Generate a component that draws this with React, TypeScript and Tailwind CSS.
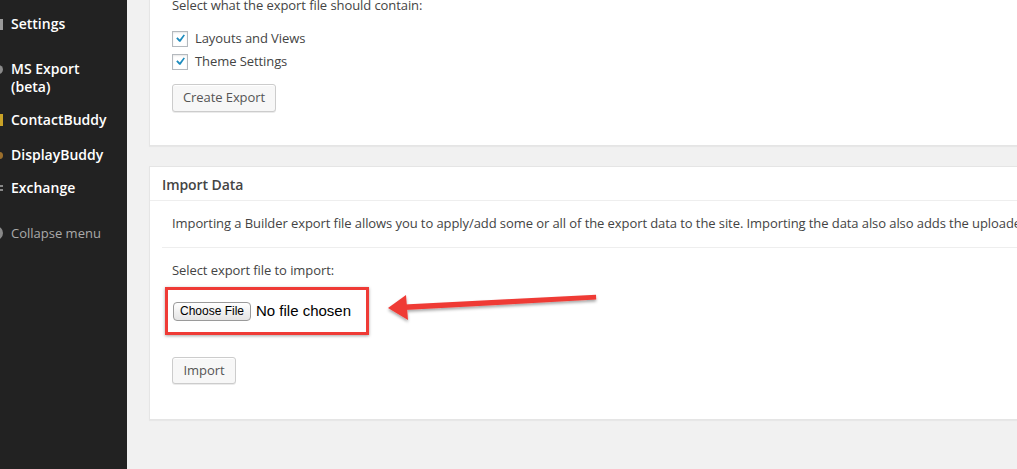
import React from "react";

const font = { fontFamily: '"Open Sans", "Liberation Sans", sans-serif' };

function Check() {
  return (
    <span className="flex h-[16px] w-[16px] items-center justify-center border border-[#b4b9be] bg-white shadow-[inset_0_1px_2px_rgba(0,0,0,0.1)]">
      <svg width="15" height="15" viewBox="0 0 20 20">
        <path d="M15.2 4.2l1.9 1.3-6.4 9.3H8.9L4.6 9.9l1.8-1.7 3.3 3.1z" fill="#1e8cbe" />
      </svg>
    </span>
  );
}

function WpButton({ children, w, h }: { children: React.ReactNode; w: string; h: string }) {
  return (
    <button
      className={`flex items-center justify-center rounded-[3px] border border-[#cccccc] bg-[#f7f7f7] text-[13px] text-[#555] shadow-[inset_0_1px_0_#fff,0_1px_0_rgba(0,0,0,0.08)] ${w} ${h}`}
    >
      {children}
    </button>
  );
}

function MenuItem({ icon, children, className }: { icon: React.ReactNode; children: React.ReactNode; className: string }) {
  return (
    <div className={`flex ${className}`}>
      <div className="relative w-[11px] shrink-0">{icon}</div>
      <div className="text-[14px] font-semibold leading-[18px] text-white">{children}</div>
    </div>
  );
}

export default function App() {
  return (
    <div className="relative flex h-[469px] w-[1017px] overflow-hidden bg-[#f1f1f1] text-[#444]" style={font}>
      <aside className="flex w-[127px] shrink-0 flex-col bg-[#222222]">
        <MenuItem className="mt-[15px]" icon={<div className="absolute left-0 top-[4px] h-[11px] w-[3px] bg-[#9a9a9a]" />}>
          Settings
        </MenuItem>
        <MenuItem className="mt-[27px]" icon={<div className="absolute left-[-6px] top-[5px] h-[9px] w-[9px] rounded-full bg-[#8a8a8a]" />}>
          MS Export
          <br />
          (beta)
        </MenuItem>
        <MenuItem className="mt-[15px]" icon={<div className="absolute left-0 top-[3px] h-[12px] w-[3px] bg-[#c9a227]" />}>
          ContactBuddy
        </MenuItem>
        <MenuItem className="mt-[17px]" icon={<div className="absolute left-[-4px] top-[6px] h-[7px] w-[7px] rounded-full bg-[#9c6f2c]" />}>
          DisplayBuddy
        </MenuItem>
        <MenuItem
          className="mt-[15px]"
          icon={
            <div className="absolute left-0 top-[6px] flex flex-col gap-[2px]">
              <div className="h-[2px] w-[3px] bg-[#888]" />
              <div className="h-[2px] w-[3px] bg-[#888]" />
            </div>
          }
        >
          Exchange
        </MenuItem>
        <div className="mt-[27px] flex">
          <div className="relative w-[11px] shrink-0">
            <div className="absolute left-[-11px] top-[2px] h-[14px] w-[14px] rounded-full bg-[#888]" />
          </div>
          <div className="text-[13px] leading-[18px] text-[#aaaaaa]">Collapse menu</div>
        </div>
      </aside>

      <main className="min-w-0 flex-1 pl-[22px] tracking-[-0.08px]">
        <div className="-mt-[6px] w-[1000px] border border-[#e5e5e5] bg-white pb-[33px] pl-[22px] shadow-[0_1px_1px_rgba(0,0,0,0.04)]">
          <p className="text-[13px] leading-[20px]">Select what the export file should contain:</p>
          <div className="mt-[12px] flex flex-col">
            <label className="flex h-[23px] items-center gap-[7px] text-[13px]">
              <Check />
              Layouts and Views
            </label>
            <label className="flex h-[23px] items-center gap-[7px] text-[13px]">
              <Check />
              Theme Settings
            </label>
          </div>
          <div className="mt-[11px]">
            <WpButton w="w-[104px]" h="h-[28px]">Create Export</WpButton>
          </div>
        </div>

        <div className="mt-[20px] w-[1000px] border border-[#e5e5e5] bg-white pb-[35px] shadow-[0_1px_1px_rgba(0,0,0,0.04)]">
          <div className="flex h-[34px] items-center border-b border-[#eeeeee] pl-[12px] pt-[2px] text-[14px] font-semibold text-[#444]">
            Import Data
          </div>
          <div className="ml-[12px]">
            <p className="whitespace-nowrap pl-[10px] pt-[12px] pb-[14px] text-[13px] leading-[20px]">
              Importing a Builder export file allows you to apply/add some or all of the export data to the site. Importing the data also also adds the uploaded
            </p>
            <div className="border-t border-[#eeeeee]" />
            <div className="pl-[10px]">
              <p className="pt-[12px] text-[13px] leading-[20px]">Select export file to import:</p>
              <div className="-ml-[7px] mt-[7px] flex h-[48px] w-[204px] items-center border-[3px] border-[#ef3b36] pl-[5px] tracking-normal shadow-[0_1px_3px_rgba(0,0,0,0.35)]">
                <span
                  className="flex h-[19px] w-[78px] items-center justify-center rounded-[4px] border border-[#9a9a9a] bg-gradient-to-b from-white to-[#e4e4e4] text-[12px] text-black"
                  style={{ fontFamily: '"Liberation Sans", Arial, sans-serif' }}
                >
                  Choose File
                </span>
                <span
                  className="ml-[5px] text-[15px] text-black"
                  style={{ fontFamily: '"Liberation Sans", Arial, sans-serif' }}
                >
                  No file chosen
                </span>
              </div>
              <div className="mt-[22px]">
                <WpButton w="w-[64px]" h="h-[27px]">Import</WpButton>
              </div>
            </div>
          </div>
        </div>
      </main>

      <svg className="pointer-events-none absolute left-0 top-0" width="1017" height="469" viewBox="0 0 1017 469">
        <defs>
          <filter id="sh" x="-10%" y="-50%" width="120%" height="200%">
            <feDropShadow dx="0" dy="2" stdDeviation="1.5" floodColor="#000" floodOpacity="0.35" />
          </filter>
        </defs>
        <g filter="url(#sh)">
          <path d="M596 294.8 L404 304.5 L404.3 310 L596.2 299.6 Z" fill="#ef3b36" />
          <path d="M388 308 L406 295 L408 320 Z" fill="#ef3b36" />
        </g>
      </svg>
    </div>
  );
}
